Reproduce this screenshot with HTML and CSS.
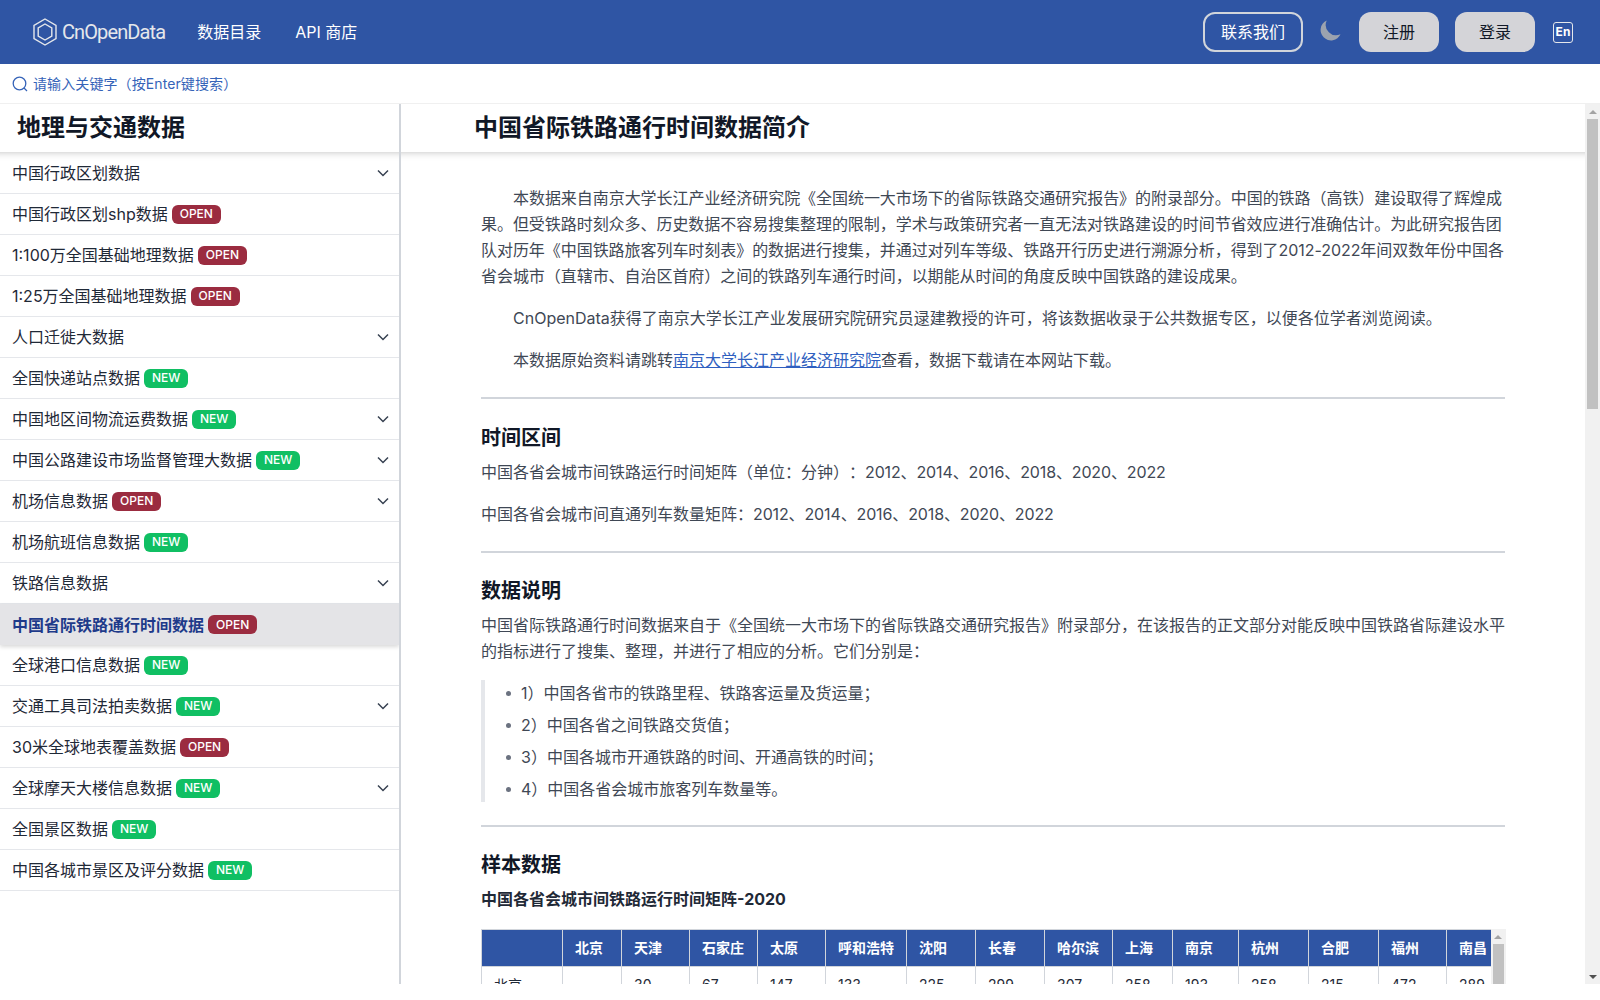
FILE: index.html
```html
<!DOCTYPE html>
<html lang="zh-CN">
<head>
  <meta charset="UTF-8">
  <meta name="viewport" content="width=device-width, initial-scale=1.0">
  <title>中国省际铁路通行时间数据</title>
  <link rel="stylesheet" href="styles.css">
</head>
<body>
  <div class="shell">

    <!-- 顶部导航 -->
    <header class="topbar">
      <a class="logo" href="#">
        <svg class="logo-mark" viewBox="0 0 24 28" fill="none" stroke="currentColor" stroke-width="1.4">
          <path d="M12 1l11 6.500v13L12 27 1 20.500v-13z"/>
          <path d="M12 6l6.800 4v8L12 22l-6.800-4v-8z"/>
        </svg>
        <span>CnOpenData</span>
      </a>
      <nav class="topnav">
        <a href="#">数据目录</a>
        <a href="#">API 商店</a>
      </nav>
      <div class="topbar-right">
        <button class="btn btn-outline">联系我们</button>
        <svg class="moon" viewBox="0 0 20 20" fill="currentColor">
          <path d="M17.293 13.293A8 8 0 016.707 2.707a8.001 8.001 0 1010.586 10.586z"/>
        </svg>
        <button class="btn btn-gray">注册</button>
        <button class="btn btn-gray">登录</button>
        <span class="lang">En</span>
      </div>
    </header>

    <!-- 搜索 -->
    <div class="search">
      <svg class="search-icon" viewBox="0 0 16 16" fill="none" stroke="currentColor" stroke-width="1.300">
        <circle cx="7.500" cy="7.500" r="6.300"/>
        <path d="M12 12l3 3"/>
      </svg>
      <span>请输入关键字（按Enter键搜索）</span>
    </div>

    <div class="panes">

      <!-- 左侧目录 -->
      <aside class="sidebar">
        <h2 class="pane-title sidebar-title">地理与交通数据</h2>
        <ul class="menu">
          <li class="menu-item"><span>中国行政区划数据</span>
            <svg class="chevron" viewBox="0 0 12 8" fill="none" stroke="currentColor" stroke-width="1.500"><path d="M1 1.500l5 5 5-5"/></svg></li>
          <li class="menu-item"><span>中国行政区划shp数据</span><em class="tag tag-open">OPEN</em></li>
          <li class="menu-item"><span>1:100万全国基础地理数据</span><em class="tag tag-open">OPEN</em></li>
          <li class="menu-item"><span>1:25万全国基础地理数据</span><em class="tag tag-open">OPEN</em></li>
          <li class="menu-item"><span>人口迁徙大数据</span>
            <svg class="chevron" viewBox="0 0 12 8" fill="none" stroke="currentColor" stroke-width="1.500"><path d="M1 1.500l5 5 5-5"/></svg></li>
          <li class="menu-item"><span>全国快递站点数据</span><em class="tag tag-new">NEW</em></li>
          <li class="menu-item"><span>中国地区间物流运费数据</span><em class="tag tag-new">NEW</em>
            <svg class="chevron" viewBox="0 0 12 8" fill="none" stroke="currentColor" stroke-width="1.500"><path d="M1 1.500l5 5 5-5"/></svg></li>
          <li class="menu-item"><span>中国公路建设市场监督管理大数据</span><em class="tag tag-new">NEW</em>
            <svg class="chevron" viewBox="0 0 12 8" fill="none" stroke="currentColor" stroke-width="1.500"><path d="M1 1.500l5 5 5-5"/></svg></li>
          <li class="menu-item"><span>机场信息数据</span><em class="tag tag-open">OPEN</em>
            <svg class="chevron" viewBox="0 0 12 8" fill="none" stroke="currentColor" stroke-width="1.500"><path d="M1 1.500l5 5 5-5"/></svg></li>
          <li class="menu-item"><span>机场航班信息数据</span><em class="tag tag-new">NEW</em></li>
          <li class="menu-item"><span>铁路信息数据</span>
            <svg class="chevron" viewBox="0 0 12 8" fill="none" stroke="currentColor" stroke-width="1.500"><path d="M1 1.500l5 5 5-5"/></svg></li>
          <li class="menu-item active"><span>中国省际铁路通行时间数据</span><em class="tag tag-open">OPEN</em></li>
          <li class="menu-item"><span>全球港口信息数据</span><em class="tag tag-new">NEW</em></li>
          <li class="menu-item"><span>交通工具司法拍卖数据</span><em class="tag tag-new">NEW</em>
            <svg class="chevron" viewBox="0 0 12 8" fill="none" stroke="currentColor" stroke-width="1.500"><path d="M1 1.500l5 5 5-5"/></svg></li>
          <li class="menu-item"><span>30米全球地表覆盖数据</span><em class="tag tag-open">OPEN</em></li>
          <li class="menu-item"><span>全球摩天大楼信息数据</span><em class="tag tag-new">NEW</em>
            <svg class="chevron" viewBox="0 0 12 8" fill="none" stroke="currentColor" stroke-width="1.500"><path d="M1 1.500l5 5 5-5"/></svg></li>
          <li class="menu-item"><span>全国景区数据</span><em class="tag tag-new">NEW</em></li>
          <li class="menu-item"><span>中国各城市景区及评分数据</span><em class="tag tag-new">NEW</em></li>
        </ul>
      </aside>

      <!-- 右侧正文 -->
      <main class="content">
        <div class="content-body">
          <h1 class="pane-title content-title">中国省际铁路通行时间数据简介</h1>
          <article class="article">
            <p class="indent intro">本数据来自南京大学长江产业经济研究院《全国统一大市场下的省际铁路交通研究报告》的附录部分。中国的铁路（高铁）建设取得了辉煌成果。但受铁路时刻众多、历史数据不容易搜集整理的限制，学术与政策研究者一直无法对铁路建设的时间节省效应进行准确估计。为此研究报告团队对历年《中国铁路旅客列车时刻表》的数据进行搜集，并通过对列车等级、铁路开行历史进行溯源分析，得到了2012-2022年间双数年份中国各省会城市（直辖市、自治区首府）之间的铁路列车通行时间，以期能从时间的角度反映中国铁路的建设成果。</p>
            <p class="indent">CnOpenData获得了南京大学长江产业发展研究院研究员逯建教授的许可，将该数据收录于公共数据专区，以便各位学者浏览阅读。</p>
            <p class="indent">本数据原始资料请跳转<a href="#">南京大学长江产业经济研究院</a>查看，数据下载请在本网站下载。</p>
            <hr class="rule-first">
            <h3>时间区间</h3>
            <p>中国各省会城市间铁路运行时间矩阵（单位：分钟）：<span class="num">2012、2014、2016、2018、2020、2022</span></p>
            <p>中国各省会城市间直通列车数量矩阵：<span class="num">2012、2014、2016、2018、2020、2022</span></p>
            <hr>
            <h3>数据说明</h3>
            <p>中国省际铁路通行时间数据来自于《全国统一大市场下的省际铁路交通研究报告》附录部分，在该报告的正文部分对能反映中国铁路省际建设水平的指标进行了搜集、整理，并进行了相应的分析。它们分别是：</p>
            <ul class="quote-list">
              <li>1）中国各省市的铁路里程、铁路客运量及货运量；</li>
              <li>2）中国各省之间铁路交货值；</li>
              <li>3）中国各城市开通铁路的时间、开通高铁的时间；</li>
              <li>4）中国各省会城市旅客列车数量等。</li>
            </ul>
            <hr class="rule-tight">
            <h3>样本数据</h3>
            <h4>中国各省会城市间铁路运行时间矩阵-2020</h4>
            <div class="table-wrap">
              <table class="matrix">
                <colgroup>
                  <col><col><col><col><col><col><col><col><col><col><col><col><col><col><col>
                </colgroup>
                <thead>
                  <tr><th></th><th>北京</th><th>天津</th><th>石家庄</th><th>太原</th><th>呼和浩特</th><th>沈阳</th><th>长春</th><th>哈尔滨</th><th>上海</th><th>南京</th><th>杭州</th><th>合肥</th><th>福州</th><th>南昌</th></tr>
                </thead>
                <tbody>
                  <tr><td>北京</td><td></td><td>30</td><td>67</td><td>147</td><td>133</td><td>225</td><td>299</td><td>307</td><td>258</td><td>193</td><td>258</td><td>215</td><td>472</td><td>289</td></tr>
                </tbody>
              </table>
              <div class="vbar">
                <span class="vbar-up"></span>
                <span class="vbar-thumb vbar-thumb-table"></span>
              </div>
            </div>
          </article>
        </div>
        <div class="vbar">
          <span class="vbar-up"></span>
          <span class="vbar-thumb vbar-thumb-page"></span>
          <span class="vbar-down"></span>
        </div>
      </main>

    </div>
  </div>
</body>
</html>
```

FILE: styles.css
```css
*{
  box-sizing: border-box;
}

html, body{
  margin: 0;
  height: 100%;
  overflow: hidden;
  background: #fff;
}

body{
  font-family: Inter, "Noto Sans CJK SC", sans-serif;
  font-size: 16px;
  line-height: 26px;
  color: #3f4855;
  text-spacing-trim: space-all;
}

a{
  color: inherit;
  text-decoration: none;
}

.shell{
  height: 984px;
  display: flex;
  flex-direction: column;
}

.topbar{
  height: 64px;
  flex: none;
  display: flex;
  align-items: center;
  padding: 0 27px 0 33px;
  background: #2f55a4;
  color: #fff;
}

.logo{
  display: flex;
  align-items: center;
  gap: 5px;
  font-family: Roboto, sans-serif;
  font-size: 20px;
  letter-spacing: -.9px;
  color: #e5e7eb;
}

.logo-mark{
  width: 24px;
  height: 28px;
}

.topnav{
  display: flex;
  gap: 34px;
  margin-left: 32px;
}

.topbar-right{
  margin-left: auto;
  display: flex;
  align-items: center;
}

.btn{
  height: 40px;
  border-radius: 12px;
  font: inherit;
  cursor: pointer;
}

.btn-outline{
  width: 100px;
  border: 2px solid #d1d5db;
  background: transparent;
  color: #fff;
}

.btn-gray{
  width: 80px;
  margin-left: 16px;
  border: 0;
  background: #d4d4d8;
  color: #111827;
}

.moon{
  width: 26px;
  height: 26px;
  margin: 0 -1px 4px 15px;
  color: #9ca3af;
}

.lang{
  width: 20px;
  height: 21px;
  margin-left: 18px;
  display: flex;
  align-items: center;
  justify-content: center;
  border: 1.500px solid #e5e7eb;
  border-radius: 3px;
  font-size: 12px;
  font-weight: 700;
  line-height: 1;
}

.search{
  height: 40px;
  flex: none;
  display: flex;
  align-items: center;
  gap: 5px;
  padding-left: 12px;
  font-size: 14px;
  letter-spacing: .1px;
  color: #3563b8;
}

.search-icon{
  width: 16px;
  height: 16px;
}

.panes{
  flex: 1;
  min-height: 0;
  display: flex;
  border-top: 1px solid #f0f0f0;
  margin-top: -1px;
}

.sidebar{
  width: 401px;
  flex: none;
  border-right: 2px solid #d1d5db;
  overflow: hidden;
}

.pane-title{
  height: 48px;
  margin: 0 -10px;
  display: flex;
  align-items: center;
  position: relative;
  z-index: 1;
  background: #fff;
  font-size: 24px;
  font-weight: 700;
  color: #111827;
  box-shadow: 0 4px 6px -1px rgba(0, 0, 0, .1), 0 2px 4px -2px rgba(0, 0, 0, .1);
}

.sidebar-title{
  padding-left: 27px;
}

.content-title{
  padding-left: 83px;
}

.menu{
  list-style: none;
  margin: 1px 0 0;
  padding: 0;
}

.menu-item{
  height: 41px;
  display: flex;
  align-items: center;
  gap: 4px;
  padding-left: 12px;
  border-bottom: 1px solid #e5e7eb;
  color: #1f2937;
  position: relative;
}

.menu-item.active{
  background: #e4e4e7;
  border-bottom: 0;
  font-weight: 700;
  color: #1e3a8a;
  box-shadow: 0 2px 4px rgba(0, 0, 0, .15);
}

.chevron{
  width: 12px;
  height: 8px;
  margin-left: auto;
  margin-right: 10px;
  color: #374151;
}

.tag{
  height: 19px;
  padding: 0 8px;
  display: inline-flex;
  align-items: center;
  border-radius: 6px;
  font-size: 12px;
  font-style: normal;
  font-weight: 500;
  line-height: 1;
  color: #fff;
}

.tag-open{
  background: #9b2c40;
}

.tag-new{
  background: #10bf63;
}

.content{
  flex: 1;
  min-width: 0;
  display: flex;
}

.content-body{
  flex: 1;
  min-width: 0;
  overflow: hidden;
}

/* 手绘滚动条 */
.vbar{
  width: 15px;
  flex: none;
  display: flex;
  flex-direction: column;
  align-items: center;
  background: #f1f1f1;
  overflow: hidden;
}

.vbar-up{
  width: 0;
  height: 0;
  margin: 6px 0 5px;
  border: 4px solid transparent;
  border-top: 0;
  border-bottom-color: #a3a3a3;
}

.vbar-down{
  width: 0;
  height: 0;
  margin: auto 0 5px;
  border: 4px solid transparent;
  border-bottom: 0;
  border-top-color: #505050;
}

.vbar-thumb{
  width: 11px;
  flex: none;
  background: #c1c1c1;
}

.vbar-thumb-page{
  height: 290px;
}

.vbar-thumb-table{
  height: 300px;
}

.article{
  width: 1024px;
  margin: 0 auto;
  padding-top: 33px;
}

.article p{
  margin: 0 0 16px;
}

.article a{
  color: #2f5fc0;
  text-decoration: underline;
}

.indent{
  text-indent: 2em;
}

.intro{
  letter-spacing: -.05px;
}

/* 数字比正文略窄 */
.num{
  letter-spacing: -.13px;
}

hr{
  height: 2px;
  margin: 24px 0;
  border: 0;
  background: #d1d5db;
}

.rule-first{
  margin-bottom: 25px;
}

.rule-tight{
  margin-top: 23px;
}

h3{
  margin: 24px 0 7px;
  font-size: 20px;
  line-height: 28px;
  font-weight: 700;
  color: #111827;
}

h4{
  margin: 6px 0 17px;
  font-size: 16px;
  line-height: 26px;
  font-weight: 700;
  color: #1f2937;
}

.quote-list{
  margin: 16px 0;
  padding: 0 0 0 24px;
  border-left: 4px solid #e5e7eb;
  list-style: none;
}

.quote-list li{
  position: relative;
  padding-left: 12px;
  margin-bottom: 6px;
}

.quote-list li:last-child{
  margin-bottom: 0;
}

.quote-list li::before{
  content: "";
  position: absolute;
  left: -3px;
  top: 11px;
  width: 5px;
  height: 5px;
  border-radius: 50%;
  background: #6b7280;
}

.table-wrap{
  height: 60px;
  display: flex;
}

.matrix{
  table-layout: fixed;
  width: 1009px;
  flex: none;
  border-collapse: collapse;
  font-size: 14px;
  line-height: 20px;
}

.matrix col:nth-child(1){ width: 81px; }
.matrix col:nth-child(2){ width: 59px; }
.matrix col:nth-child(3){ width: 68px; }
.matrix col:nth-child(4){ width: 68px; }
.matrix col:nth-child(5){ width: 68px; }
.matrix col:nth-child(6){ width: 81px; }
.matrix col:nth-child(7){ width: 69px; }
.matrix col:nth-child(8){ width: 69px; }
.matrix col:nth-child(9){ width: 68px; }
.matrix col:nth-child(10){ width: 60px; }
.matrix col:nth-child(11){ width: 66px; }
.matrix col:nth-child(12){ width: 70px; }
.matrix col:nth-child(13){ width: 70px; }
.matrix col:nth-child(14){ width: 68px; }
.matrix col:nth-child(15){ width: 44px; }

.matrix th, .matrix td{
  padding: 8px 0 8px 12px;
  border: 1px solid #d1d5db;
  text-align: left;
  white-space: nowrap;
}

.matrix tr > :last-child{
  border-right: 0;
}

.matrix th{
  background: #2f55a4;
  color: #fff;
  font-weight: 700;
}

.matrix td{
  color: #1f2937;
}
```
